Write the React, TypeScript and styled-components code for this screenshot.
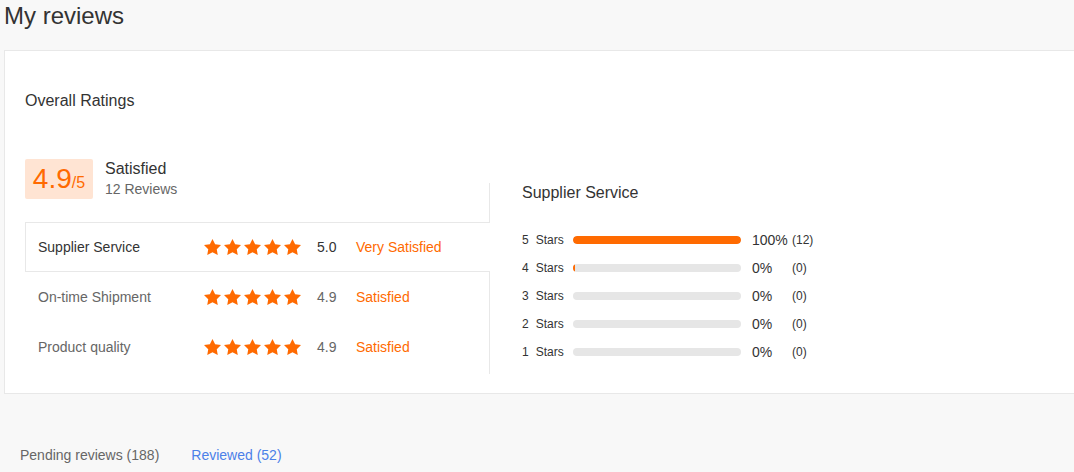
import React from "react";
import styled, { createGlobalStyle } from "styled-components";

const ORANGE = "#ff6a00";
const BORDER = "#e8e8e8";

const GlobalStyle = createGlobalStyle`
  html, body {
    margin: 0;
    padding: 0;
    overflow: hidden;
    background: #f8f8f8;
  }
  body {
    font-family: "Liberation Sans", Arial, sans-serif;
    color: #333;
  }
  * { box-sizing: border-box; }
`;

const Page = styled.div`
  width: 1100px;
  padding-left: 4px;
`;

const Heading = styled.h1`
  margin: 0;
  height: 50px;
  font-size: 24px;
  line-height: 32px;
  font-weight: normal;
  color: #333;
`;

const Card = styled.section`
  background: #fff;
  border: 1px solid ${BORDER};
  padding: 38px 20px 19px 20px;
`;

const CardTitle = styled.h2`
  margin: 0;
  font-size: 16px;
  line-height: 24px;
  font-weight: normal;
  color: #333;
`;

const RatingBody = styled.div`
  display: flex;
  align-items: flex-start;
  margin-top: 46px;
`;

const LeftCol = styled.div`
  width: 464px;
  display: flex;
  flex-direction: column;
`;

const ScoreHeader = styled.div`
  display: flex;
  align-items: flex-start;
  gap: 12px;
  height: 40px;
`;

const ScoreBox = styled.div`
  width: 68px;
  height: 40px;
  background: #ffe4d3;
  border-radius: 2px;
  display: flex;
  align-items: baseline;
  justify-content: center;
  line-height: 40px;
  color: ${ORANGE};
`;

const ScoreBig = styled.span`
  font-size: 28px;
`;

const ScoreSmall = styled.span`
  font-size: 16px;
`;

const ScoreText = styled.div`
  display: flex;
  flex-direction: column;
`;

const ScoreLabel = styled.span`
  font-size: 16px;
  line-height: 20px;
  color: #333;
`;

const ScoreCount = styled.span`
  font-size: 14px;
  line-height: 20px;
  color: #666;
`;

const TabList = styled.div`
  margin-top: 23px;
  display: flex;
  flex-direction: column;
`;

const Tab = styled.div<{ $active?: boolean }>`
  position: relative;
  z-index: 1;
  width: calc(100% + 1px);
  margin-right: -1px;
  height: 50px;
  display: flex;
  align-items: center;
  padding-left: 12px;
  font-size: 14px;
  border: 1px solid ${(p) => (p.$active ? BORDER : "transparent")};
  border-right: none;
  background: ${(p) => (p.$active ? "#fff" : "transparent")};
  color: ${(p) => (p.$active ? "#333" : "#666")};
`;

const TabLabel = styled.span`
  width: 166px;
`;

const Stars = styled.span`
  display: flex;
  gap: 3px;
`;

const TabScore = styled.span`
  width: 39px;
  margin-left: 16px;
`;

const TabStatus = styled.span`
  color: ${ORANGE};
`;

const RightPanel = styled.div`
  flex: 1;
  margin-top: 24px;
  border-left: 1px solid ${BORDER};
  padding: 0 0 8px 32px;
`;

const PanelTitle = styled.div`
  font-size: 16px;
  line-height: 20px;
  color: #333;
`;

const DistList = styled.div`
  margin-top: 23px;
  display: flex;
  flex-direction: column;
`;

const DistRow = styled.div`
  height: 28px;
  display: flex;
  align-items: center;
`;

const DistLabel = styled.span`
  width: 51px;
  font-size: 12px;
  color: #333;
  display: flex;
  gap: 7px;
`;

const Track = styled.div`
  width: 168px;
  height: 8px;
  border-radius: 4px;
  background: #e6e6e6;
  overflow: hidden;
`;

const Fill = styled.div`
  height: 100%;
  background: ${ORANGE};
  border-radius: 4px;
`;

const Percent = styled.span`
  width: 40px;
  margin-left: 11px;
  font-size: 14px;
  color: #333;
`;

const Count = styled.span`
  font-size: 12px;
  color: #333;
`;

const ReviewTabs = styled.nav`
  display: flex;
  gap: 32px;
  margin-top: 51px;
  padding-left: 16px;
  font-size: 14px;
  line-height: 20px;
`;

const ReviewTab = styled.span<{ $active?: boolean }>`
  color: ${(p) => (p.$active ? "#4c80e8" : "#666")};
`;

const Star = () => (
  <svg width="17" height="16" viewBox="2 2 20 19" preserveAspectRatio="none">
    <path
      d="M12 2l3.09 6.26L22 9.27l-5 4.87 1.18 6.88L12 17.77l-6.18 3.25L7 14.14 2 9.27l6.91-1.01L12 2z"
      fill={ORANGE}
    />
  </svg>
);

const categories = [
  { label: "Supplier Service", score: "5.0", status: "Very Satisfied", active: true },
  { label: "On-time Shipment", score: "4.9", status: "Satisfied" },
  { label: "Product quality", score: "4.9", status: "Satisfied" },
];

const distribution = [
  { stars: 5, fill: "100%", pct: "100%", count: 12 },
  { stars: 4, fill: "2px", pct: "0%", count: 0 },
  { stars: 3, fill: "0", pct: "0%", count: 0 },
  { stars: 2, fill: "0", pct: "0%", count: 0 },
  { stars: 1, fill: "0", pct: "0%", count: 0 },
];

export default function App() {
  return (
    <>
      <GlobalStyle />
      <Page>
        <Heading>My reviews</Heading>
        <Card>
          <CardTitle>Overall Ratings</CardTitle>
          <RatingBody>
            <LeftCol>
              <ScoreHeader>
                <ScoreBox>
                  <ScoreBig>4.9</ScoreBig>
                  <ScoreSmall>/5</ScoreSmall>
                </ScoreBox>
                <ScoreText>
                  <ScoreLabel>Satisfied</ScoreLabel>
                  <ScoreCount>12 Reviews</ScoreCount>
                </ScoreText>
              </ScoreHeader>
              <TabList>
                {categories.map((c) => (
                  <Tab key={c.label} $active={c.active}>
                    <TabLabel>{c.label}</TabLabel>
                    <Stars>
                      {[0, 1, 2, 3, 4].map((i) => (
                        <Star key={i} />
                      ))}
                    </Stars>
                    <TabScore>{c.score}</TabScore>
                    <TabStatus>{c.status}</TabStatus>
                  </Tab>
                ))}
              </TabList>
            </LeftCol>
            <RightPanel>
              <PanelTitle>Supplier Service</PanelTitle>
              <DistList>
                {distribution.map((d) => (
                  <DistRow key={d.stars}>
                    <DistLabel>
                      <span>{d.stars}</span>
                      <span>Stars</span>
                    </DistLabel>
                    <Track>
                      <Fill style={{ width: d.fill }} />
                    </Track>
                    <Percent>{d.pct}</Percent>
                    <Count>({d.count})</Count>
                  </DistRow>
                ))}
              </DistList>
            </RightPanel>
          </RatingBody>
        </Card>
        <ReviewTabs>
          <ReviewTab>Pending reviews (188)</ReviewTab>
          <ReviewTab $active>Reviewed (52)</ReviewTab>
        </ReviewTabs>
      </Page>
    </>
  );
}
